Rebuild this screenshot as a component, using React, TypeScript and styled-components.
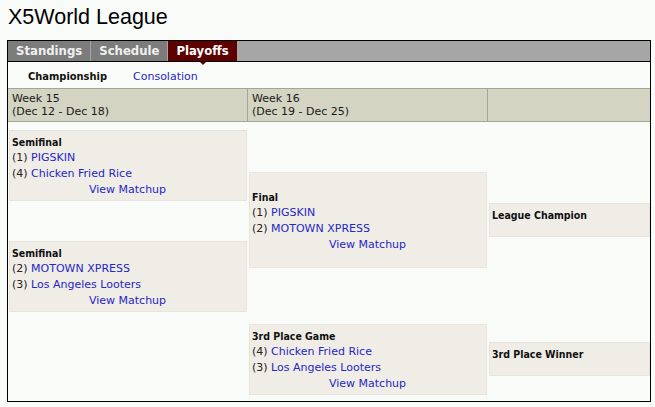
import React from 'react'
import styled, { createGlobalStyle } from 'styled-components'

const GlobalStyle = createGlobalStyle`
  body {
    margin: 0;
    background: #f8fbf7;
    font-family: "DejaVu Sans", Verdana, sans-serif;
    font-size: 11px;
    color: #1a1a1a;
  }
`;

interface Team {
  seed: number;
  name: string;
}

interface Game {
  title: string;
  teams: Team[];
}

const semis: Game[] = [
  { title: "Semifinal", teams: [{ seed: 1, name: "PIGSKIN" }, { seed: 4, name: "Chicken Fried Rice" }] },
  { title: "Semifinal", teams: [{ seed: 2, name: "MOTOWN XPRESS" }, { seed: 3, name: "Los Angeles Looters" }] }
];

const finals: Game[] = [
  { title: "Final", teams: [{ seed: 1, name: "PIGSKIN" }, { seed: 2, name: "MOTOWN XPRESS" }] },
  { title: "3rd Place Game", teams: [{ seed: 4, name: "Chicken Fried Rice" }, { seed: 3, name: "Los Angeles Looters" }] }
];

const GameBox = ({ game, tall }: { game: Game; tall?: boolean }) => (
  <Box tall={tall}>
    <BoxTitle>{game.title}</BoxTitle>
    {game.teams.map(t => (
      <Line key={t.seed}>
        ({t.seed}) <Link>{t.name}</Link>
      </Line>
    ))}
    <Matchup>
      <Link>View Matchup</Link>
    </Matchup>
  </Box>
);

export default function App() {
  return (
    <Page>
      <GlobalStyle />
      <Title>X5World League</Title>
      <Panel>
        <TabBar>
          <Tab>Standings</Tab>
          <Tab>Schedule</Tab>
          <Tab active>Playoffs</Tab>
        </TabBar>
        <SubTabs>
          <SubTab active>Championship</SubTab>
          <SubTab>Consolation</SubTab>
        </SubTabs>
        <Bracket>
          <HeadCell>
            Week 15
            <br />
            (Dec 12 - Dec 18)
          </HeadCell>
          <HeadCell>
            Week 16
            <br />
            (Dec 19 - Dec 25)
          </HeadCell>
          <HeadCell last />
          <Column top={8} gap={40}>
            {semis.map((g, i) => (
              <GameBox key={i} game={g} />
            ))}
          </Column>
          <Column top={50} gap={56}>
            <GameBox game={finals[0]} tall />
            <GameBox game={finals[1]} />
          </Column>
          <Column top={81} gap={105} last>
            <ResultBox>
              <BoxTitle>League Champion</BoxTitle>
            </ResultBox>
            <ResultBox>
              <BoxTitle>3rd Place Winner</BoxTitle>
            </ResultBox>
          </Column>
        </Bracket>
      </Panel>
    </Page>
  );
}

const Page = styled.div`
  padding: 0 4px 6px 7px;
  width: 644px;
`;

const Title = styled.h1`
  margin: 0;
  padding: 5px 0 0 1px;
  height: 40px;
  box-sizing: border-box;
  font-family: "Liberation Sans", Arial, sans-serif;
  font-weight: normal;
  font-size: 21.5px;
  color: #000;
`;

const Panel = styled.div`
  border: 1px solid #000;
  background: #f8fbf7;
`;

const TabBar = styled.div`
  display: flex;
  height: 20px;
  background: #a6a6a6;
  border-bottom: 1px solid #000;
`;

const Tab = styled.div<{ active?: boolean }>`
  position: relative;
  display: flex;
  align-items: center;
  padding: 0 8px;
  margin-right: 1px;
  background: ${p => (p.active ? "#5c0000" : "#7c7c7c")};
  color: ${p => (p.active ? "#fff" : "#f0f0f0")};
  font-weight: bold;
  font-size: 11.7px;
  &::after {
    content: "";
    display: ${p => (p.active ? "block" : "none")};
    position: absolute;
    left: 50%;
    bottom: -4px;
    margin-left: -3px;
    border-left: 3px solid transparent;
    border-right: 3px solid transparent;
    border-top: 3px solid #5c0000;
  }
`;

const SubTabs = styled.div`
  display: flex;
  align-items: center;
  height: 26px;
  padding: 3px 0 0 20px;
  box-sizing: border-box;
  gap: 26px;
`;

const SubTab = styled.span<{ active?: boolean }>`
  font-family: ${p => (p.active ? '"DejaVu Sans Condensed", "DejaVu Sans", sans-serif' : "inherit")};
  font-weight: ${p => (p.active ? "bold" : "normal")};
  color: ${p => (p.active ? "#111" : "#2626c4")};
`;

const Bracket = styled.div`
  display: grid;
  grid-template-columns: 240px 240px 1fr;
  align-items: start;
  padding-bottom: 6px;
`;

const HeadCell = styled.div<{ last?: boolean }>`
  height: 30px;
  padding: 3px 4px 0;
  box-sizing: content-box;
  line-height: 13px;
  background: #d3d4c2;
  border-top: 1px solid #a3a697;
  border-bottom: 1px solid #a3a697;
  border-right: ${p => (p.last ? "none" : "1px solid #a3a697")};
  height: 29px;
`;

const Column = styled.div<{ top: number; gap: number; last?: boolean }>`
  display: flex;
  flex-direction: column;
  gap: ${p => p.gap}px;
  padding: ${p => p.top}px ${p => (p.last ? 0 : 1)}px 0 1px;
`;

const Box = styled.div<{ tall?: boolean }>`
  display: flex;
  flex-direction: column;
  justify-content: center;
  min-height: ${p => (p.tall ? 96 : 70)}px;
  box-sizing: border-box;
  padding: 3px 3px 2px 2px;
  background: #efede6;
  border: 1px solid #e6e4dc;
  line-height: 16px;
`;

const ResultBox = styled(Box)`
  justify-content: flex-start;
  min-height: 34px;
`;

const BoxTitle = styled.div`
  font-family: "DejaVu Sans Condensed", "DejaVu Sans", sans-serif;
  font-weight: bold;
  font-size: 10.5px;
  color: #111;
`;

const Line = styled.div`
  color: #222;
`;

const Matchup = styled.div`
  text-align: center;
`;

const Link = styled.span`
  color: #2626c4;
`;
